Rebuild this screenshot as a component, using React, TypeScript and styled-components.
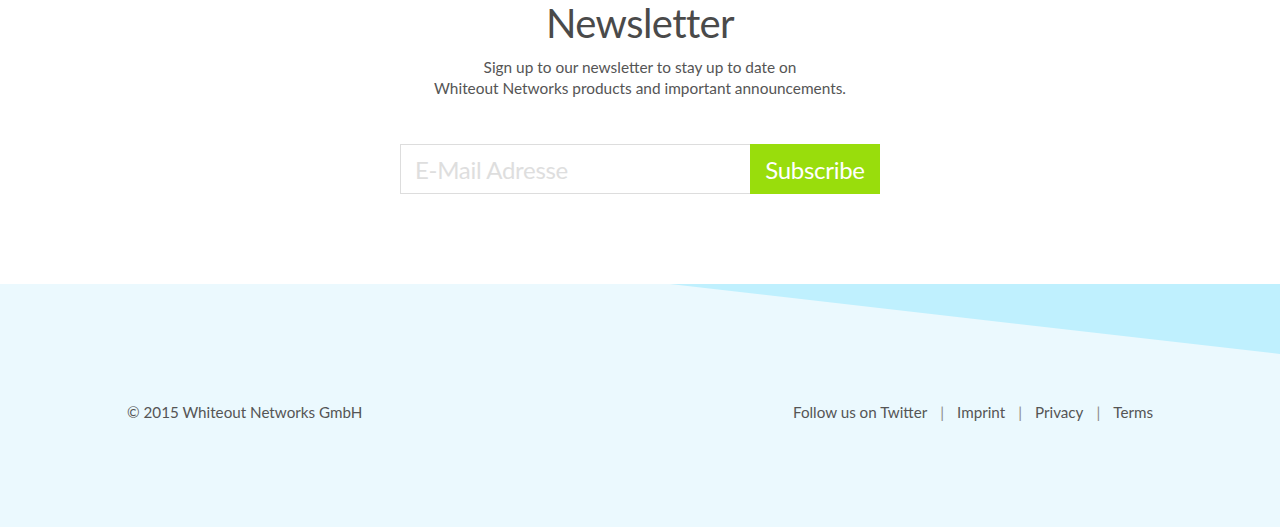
import React from "react";
import styled, { createGlobalStyle } from "styled-components";

const Global = createGlobalStyle`
  html, body { margin: 0; padding: 0; background: #ffffff; }
  body { font-family: Lato, "Open Sans", sans-serif; color: #555555; }
  * { box-sizing: border-box; }
`;

const Page = styled.div`
  width: 1280px;
  height: 527px;
  overflow: hidden;
  display: flex;
  flex-direction: column;
`;

const NewsletterSection = styled.section`
  height: 284px;
  display: flex;
  flex-direction: column;
  align-items: center;
  background: #ffffff;
`;

const Title = styled.h2`
  margin: 3px 0 0 0;
  font-size: 40px;
  letter-spacing: -0.6px;
  line-height: 40px;
  font-weight: 400;
  color: #4a4a4a;
`;

const Lead = styled.p`
  margin: 14px 0 0 0;
  font-size: 15.4px;
  line-height: 21px;
  text-align: center;
  color: #555555;
`;

const Form = styled.form`
  margin-top: 45px;
  display: flex;
`;

const EmailInput = styled.input`
  width: 350px;
  height: 50px;
  border: 1px solid #dddddd;
  border-right: none;
  padding: 0 14px;
  font-family: inherit;
  font-size: 24px;
  letter-spacing: -0.3px;
  color: #555;
  outline: none;
  &::placeholder { color: #dedede; }
`;

const SubscribeButton = styled.button`
  width: 130px;
  height: 50px;
  border: none;
  background: #99dd0c;
  color: #ffffff;
  font-family: inherit;
  font-size: 24px;
  letter-spacing: -0.3px;
  padding: 0;
  cursor: pointer;
`;

const Footer = styled.footer`
  position: relative;
  flex: 1;
  background: #ebf9fe;
  display: flex;
  justify-content: center;
`;

const Wedge = styled.svg`
  position: absolute;
  top: 0;
  right: 0;
`;

const FooterInner = styled.div`
  position: relative;
  width: 1026px;
  padding-top: 117px;
  display: flex;
  align-items: flex-start;
  justify-content: space-between;
  font-size: 15.2px;
  line-height: 22px;
  color: #555555;
`;

const Copyright = styled.span``;

const Links = styled.nav`
  display: flex;
  align-items: center;
`;

const FooterLink = styled.a`
  color: #555555;
  text-decoration: none;
`;

const Sep = styled.span`
  color: #8a8a8a;
  margin: 0 13px;
`;

export default function App() {
  return (
    <>
      <Global />
      <Page>
        <NewsletterSection>
          <Title>Newsletter</Title>
          <Lead>
            Sign up to our newsletter to stay up to date on
            <br />
            Whiteout Networks products and important announcements.
          </Lead>
          <Form onSubmit={(e) => e.preventDefault()}>
            <EmailInput type="email" placeholder="E-Mail Adresse" />
            <SubscribeButton type="submit">Subscribe</SubscribeButton>
          </Form>
        </NewsletterSection>
        <Footer>
          <Wedge width="610" height="70" viewBox="0 0 610 70">
            <polygon points="0,0 610,0 610,70" fill="#bff0fe" />
          </Wedge>
          <FooterInner>
            <Copyright>© 2015 Whiteout Networks GmbH</Copyright>
            <Links>
              <FooterLink href="#">Follow us on Twitter</FooterLink>
              <Sep>|</Sep>
              <FooterLink href="#">Imprint</FooterLink>
              <Sep>|</Sep>
              <FooterLink href="#">Privacy</FooterLink>
              <Sep>|</Sep>
              <FooterLink href="#">Terms</FooterLink>
            </Links>
          </FooterInner>
        </Footer>
      </Page>
    </>
  );
}
